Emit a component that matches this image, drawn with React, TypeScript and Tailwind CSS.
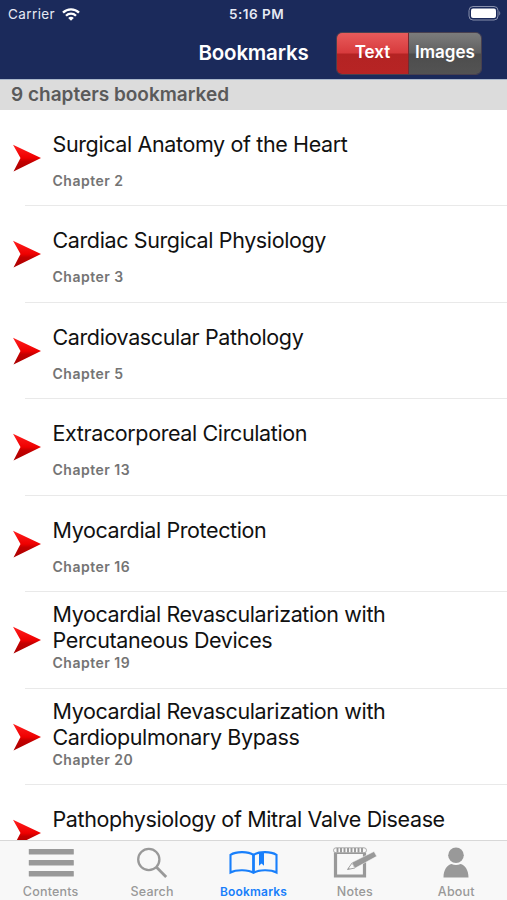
import type { ReactNode } from 'react';

const chapters = [
  { number: 2, lines: ['Surgical Anatomy of the Heart'] },
  { number: 3, lines: ['Cardiac Surgical Physiology'] },
  { number: 5, lines: ['Cardiovascular Pathology'] },
  { number: 13, lines: ['Extracorporeal Circulation'] },
  { number: 16, lines: ['Myocardial Protection'] },
  { number: 19, lines: ['Myocardial Revascularization with', 'Percutaneous Devices'] },
  { number: 20, lines: ['Myocardial Revascularization with', 'Cardiopulmonary Bypass'] },
  { lines: ['Pathophysiology of Mitral Valve Disease'] },
];

export default function App() {
  return (
    <div className="w-[507px] h-[900px] flex flex-col overflow-hidden bg-white font-['Inter',sans-serif]">
      <header className="h-[79px] shrink-0 bg-[#1b2a5b] text-white">
        <StatusBar />
        <div className="h-[50px] grid grid-cols-3 items-center">
          <h1 className="col-start-2 text-center text-[20.5px] leading-6 font-semibold tracking-[-0.2px]">Bookmarks</h1>
          <div className="justify-self-end mr-[25px] w-[146px] h-[43px] flex rounded-md overflow-hidden border border-[#48404f] text-[17px] font-semibold">
            <button className="w-1/2 border-r border-[#762a30] bg-[linear-gradient(#e85b5b_0%,#d73b3d_48%,#b42323_52%,#b72424_100%)]">Text</button>
            <button className="w-1/2 bg-[linear-gradient(#7c7c7c_0%,#606060_48%,#4d4d4d_52%,#535353_100%)]">Images</button>
          </div>
        </div>
      </header>

      <div className="h-[30.5px] shrink-0 border-t border-[#aab7cb] bg-[#dcdcdc] pl-[11px] text-[19px] leading-[30px] font-semibold text-[#5a5a5a]">
        9 chapters bookmarked
      </div>

      <main className="flex-1 min-h-0 overflow-hidden">
        {chapters.map(c => <ChapterRow key={c.lines.join(' ')} {...c} />)}
      </main>

      <nav className="h-[60px] shrink-0 grid grid-cols-5 border-t border-[#d8d8d8] bg-[#f8f8f8]">
        <Tab label="Contents"><ContentsIcon /></Tab>
        <Tab label="Search"><SearchIcon /></Tab>
        <Tab label="Bookmarks" active><BookIcon /></Tab>
        <Tab label="Notes"><NotesIcon /></Tab>
        <Tab label="About"><PersonIcon /></Tab>
      </nav>
    </div>
  );
}

function StatusBar() {
  return (
    <div className="h-7 pl-2 pr-1.5 grid grid-cols-3 items-center text-[13.5px] text-[#e6e9f3]">
      <div className="flex items-center gap-[7px]">
        <span className="tracking-[0.4px]">Carrier</span>
        <svg width="18" height="13" viewBox="0 0 18 13" fill="none" stroke="#fff" strokeWidth="2.3">
          <path d="M1 4.6C5.4.2 12.6.2 17 4.6" />
          <path d="M4 7.8C6.800 5 11.200 5 14 7.8" />
          <path d="M9 12.7 6.2 9.9C7.8 8.5 10.2 8.5 11.8 9.9Z" fill="#fff" stroke="none" />
        </svg>
      </div>
      <span className="pl-1 text-center font-semibold tracking-[0.5px]">5:16 PM</span>
      <svg className="justify-self-end" width="33" height="16" viewBox="0 0 33 16">
        <rect x="1" y="0.5" width="29" height="13.5" rx="4" fill="none" stroke="#8890ad" />
        <rect x="3" y="2.5" width="25" height="9.5" rx="2" fill="#fff" />
        <path d="M31.3 5v4.5c1.3-.7 1.3-3.8 0-4.5Z" fill="#8890ad" />
      </svg>
    </div>
  );
}

function ChapterRow({ number, lines }: { number?: number; lines: string[] }) {
  const twoLines = lines.length > 1;
  return (
    <div className="h-[96.5px] flex">
      <div className="order-first self-end w-[482px] ml-[25px] -mr-[507px] h-px shrink-0 bg-[#e9e9e9]" />
      <svg className="ml-3 mt-[34px] shrink-0" width="30" height="28" viewBox="0 0 30 28">
        <defs>
          <linearGradient id={`arrow-${number ?? 'last'}`} x1="0" y1="0" x2="0" y2="1">
            <stop offset="0" stopColor="#ff2020" />
            <stop offset=".5" stopColor="#ee0000" />
            <stop offset=".62" stopColor="#c40000" />
            <stop offset="1" stopColor="#a80000" />
          </linearGradient>
        </defs>
        <path d="M1 .7 29 14 1.5 27.500 8.500 14Z" fill={`url(#arrow-${number ?? 'last'})`} />
      </svg>
      <div className={`ml-[10.5px] ${twoLines ? 'pt-[9px]' : 'pt-[21px]'}`}>
        <h2 className="text-[21.5px] leading-[26px] tracking-[-0.38px] text-[#111]">
          {lines.map(line => <span key={line} className="block whitespace-nowrap">{line}</span>)}
        </h2>
        {number && (
          <p className={`text-sm leading-[18px] font-semibold tracking-[0.5px] text-[#747474] ${twoLines ? 'mt-px' : 'mt-[15px]'}`}>
            Chapter {number}
          </p>
        )}
      </div>
    </div>
  );
}

function Tab({ label, active, children }: { label: string; active?: boolean; children: ReactNode }) {
  return (
    <button className={`flex flex-col items-center ${active ? 'text-[#187ffb]' : 'text-[#999]'}`}>
      <span className="h-[43px] flex items-center justify-center">{children}</span>
      <span className={`leading-4 ${active ? 'text-[12px] font-semibold tracking-[0.2px]' : 'text-[12.5px] font-medium tracking-[0.2px]'}`}>{label}</span>
    </button>
  );
}

function ContentsIcon() {
  return (
    <svg width="46" height="28" viewBox="0 0 46 28" fill="currentColor">
      <rect x=".8" width="45" height="5.500" rx=".6" />
      <rect x=".8" y="11" width="45" height="5.500" rx=".6" />
      <rect x=".8" y="22" width="45" height="5.500" rx=".6" />
    </svg>
  );
}

function SearchIcon() {
  return (
    <svg width="32" height="32" viewBox="0 0 32 32" fill="none" stroke="currentColor">
      <circle cx="12.800" cy="12.500" r="10.600" strokeWidth="2.3" />
      <path d="m20.500 20.300 9.700 9.700" strokeWidth="2.8" />
    </svg>
  );
}

function BookIcon() {
  return (
    <svg width="49" height="24" viewBox="0 0 49 24" fill="none" stroke="currentColor" strokeWidth="2.1">
      <path d="M24.500 3.800C19.500.5 7.500 0 1.500 3.800V21.500c6-3.200 18-2.800 23 .3 5-3.100 17-3.500 23-.3V3.800c-6-3.800-18-3.300-23 0Z" />
      <path d="M24.500 3.800v18" strokeWidth="2.8" />
      <path d="M30 1.500h5v13.200L32.500 12.500 30 14.700Z" fill="currentColor" stroke="none" />
    </svg>
  );
}

function NotesIcon() {
  return (
    <svg width="44" height="32" viewBox="0 0 44 32" fill="none" stroke="currentColor">
      <path d="M2.500 5.500V29H31.500V5.500" strokeWidth="3.2" />
      <path d="M2 6h30" strokeWidth="2" />
      <rect x=".5" y=".8" width="33" height="5" rx="2.500" fill="#f8f8f8" strokeWidth=".8" />
      <path d="M4.500 1v4.500M8 1v4.500M11.500 1v4.500M15 1v4.500M18.500 1v4.500M22 1v4.500M25.500 1v4.500M29 1v4.500" strokeWidth="1.900" />
      <path d="m14.500 22.500 4.500-6.500 3 5Z" fill="#f8f8f8" strokeWidth=".9" />
      <path d="m14.500 22.500 1.300-2 .9 1.600Z" fill="currentColor" stroke="none" />
      <path d="M18.800 15.500 41 4.500l2.700 4.800L21.800 21.300Z" fill="currentColor" stroke="#f8f8f8" strokeWidth=".5" />
    </svg>
  );
}

function PersonIcon() {
  return (
    <svg width="26" height="31" viewBox="0 0 26 31" fill="currentColor">
      <circle cx="13" cy="8.200" r="7.800" />
      <path d="M.5 30.500C.5 23 4 17.800 8.500 17c2.800 1.200 6.200 1.200 9 0 4.500.8 8 6 8 13.500Z" />
    </svg>
  );
}
